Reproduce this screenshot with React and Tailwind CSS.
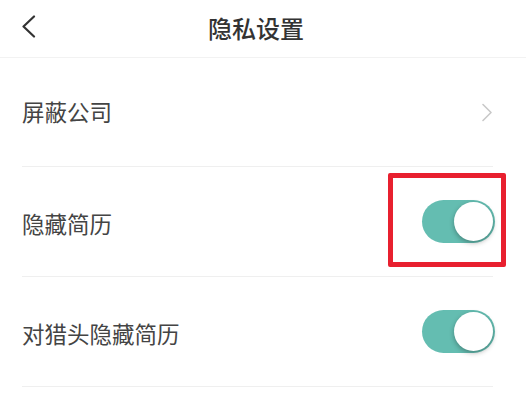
import React from "react";

function Toggle({ marked }) {
  return (
    <div className="relative">
      {marked && (
        <div className="absolute -left-[34px] -right-[13px] -top-[27px] -bottom-[24px] border-[5px] border-[#e8202f] rounded-[2px]" />
      )}
      <div className="relative w-[73px] h-[43px] rounded-full bg-[#64bdb1] -mr-[2px]">
        <div className="absolute right-[2px] top-[2px] w-[39px] h-[39px] rounded-full bg-white shadow-[0_2px_5px_rgba(0,0,0,0.3)]" />
      </div>
    </div>
  );
}

export default function App() {
  const font = { fontFamily: '"Noto Sans CJK SC", "Noto Sans", sans-serif' };

  return (
    <div className="w-[526px] h-[417px] bg-white overflow-hidden" style={font}>
      {/* header */}
      <div className="relative h-[58px] flex items-center justify-center border-b border-[#f2f2f2]">
        <svg className="absolute left-[21px] top-[15px]" width="16" height="23" viewBox="0 0 16 23" fill="none">
          <path d="M13 1.5L2.5 11.5L13 21.5" stroke="#333" strokeWidth="2.2" strokeLinecap="round" strokeLinejoin="round" />
        </svg>
        <span className="text-[24px] font-medium text-[#333] leading-none -mt-[2px] mr-[14px]">隐私设置</span>
      </div>

      {/* rows */}
      <div className="ml-[22px] mr-[33px]">
        <div className="h-[109px] flex items-center justify-between border-b border-[#efefef]">
          <span className="text-[22.5px] text-[#444]">屏蔽公司</span>
          <svg width="12" height="19" viewBox="0 0 12 19" fill="none">
            <path d="M2 1.5L10 9.5L2 17.5" stroke="#c8c8c8" strokeWidth="1.6" strokeLinecap="round" strokeLinejoin="round" />
          </svg>
        </div>
        <div className="h-[110px] flex items-center justify-between border-b border-[#efefef]">
          <span className="text-[22.5px] text-[#444] mt-[4px]">隐藏简历</span>
          <Toggle marked />
        </div>
        <div className="h-[110px] flex items-center justify-between border-b border-[#efefef]">
          <span className="text-[22.5px] text-[#444] mt-[4px]">对猎头隐藏简历</span>
          <Toggle />
        </div>
      </div>
    </div>
  );
}
